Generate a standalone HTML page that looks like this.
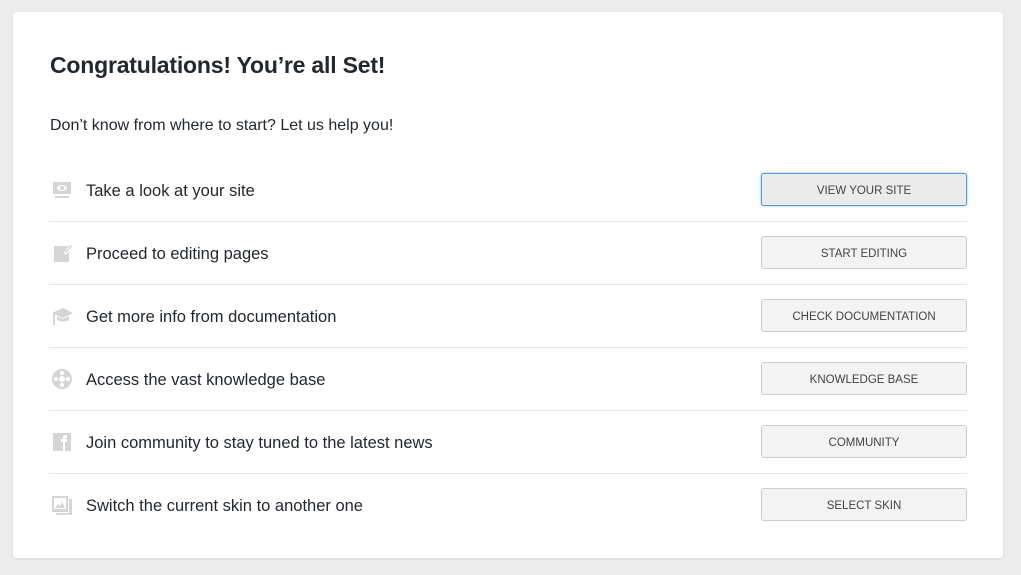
<!DOCTYPE html>
<html><head><style>
body{margin:0;background:#ececec;width:1021px;height:575px;font-family:"Liberation Sans",sans-serif;color:#23282d;overflow:hidden}
.card{position:absolute;left:13px;top:12px;width:990px;height:546px;background:#fff;border-radius:4px;box-shadow:0 1px 3px rgba(0,0,0,.08)}
h1{position:absolute;left:37px;top:40px;margin:0;font-size:23px;font-weight:bold;letter-spacing:-0.2px}
.sub{position:absolute;left:37px;top:105px;font-size:16px}
.row{position:absolute;left:36px;width:918px;height:63px;border-bottom:1px solid #e5e5e5}
.row .t{position:absolute;left:37px;top:24px;font-size:16.5px}
.row .i{position:absolute;left:2px;top:21px;width:22px;height:22px}
.btn{position:absolute;left:712px;top:15px;width:204px;height:31px;border:1px solid #ccc;border-radius:3px;background:#f3f3f3;font-size:11.5px;color:#444;text-align:center;line-height:34px}
.btn.a{border-color:#5b9dd9;background:#ebebeb;box-shadow:0 0 2px rgba(30,140,190,.6)}
</style></head><body>
<div class="card">
<h1>Congratulations! You’re all Set!</h1>
<div class="sub">Don’t know from where to start? Let us help you!</div>
<div class="row" style="top:146px"><svg class="i" viewBox="0 0 22 22"><rect x="2" y="3" width="18" height="12" fill="#d5d5d5"/><ellipse cx="11" cy="9" rx="5" ry="3" fill="#fff"/><circle cx="11" cy="9" r="2" fill="#d5d5d5"/><rect x="4" y="17" width="14" height="2" fill="#d5d5d5"/></svg><div class="t">Take a look at your site</div><div class="btn a">VIEW YOUR SITE</div></div>
<div class="row" style="top:209px"><svg class="i" viewBox="0 0 22 22"><rect x="3" y="4" width="15" height="16" fill="#d5d5d5"/><path d="M13 11 L20 2 L22 4 L15 12Z" fill="#d5d5d5" stroke="#fff"/></svg><div class="t">Proceed to editing pages</div><div class="btn">START EDITING</div></div>
<div class="row" style="top:272px"><svg class="i" viewBox="0 0 22 22"><path d="M1 8 L12 3 L22 8 L12 13Z" fill="#d5d5d5"/><path d="M6 11 V15 Q12 18 18 15 V11 L12 14Z" fill="#d5d5d5"/><rect x="2" y="8" width="2" height="12" fill="#d5d5d5"/></svg><div class="t">Get more info from documentation</div><div class="btn">CHECK DOCUMENTATION</div></div>
<div class="row" style="top:335px"><svg class="i" viewBox="0 0 22 22"><circle cx="11" cy="11" r="10" fill="#d5d5d5"/><circle cx="11" cy="11" r="3" fill="#fff"/><circle cx="11" cy="5" r="2" fill="#fff"/><circle cx="11" cy="17" r="2" fill="#fff"/><circle cx="5" cy="11" r="2" fill="#fff"/><circle cx="17" cy="11" r="2" fill="#fff"/></svg><div class="t">Access the vast knowledge base</div><div class="btn">KNOWLEDGE BASE</div></div>
<div class="row" style="top:398px"><svg class="i" viewBox="0 0 22 22"><rect x="2" y="2" width="18" height="18" fill="#d5d5d5"/><path d="M12 20 V11 H10 V8 H12 V6 Q12 4 15 4 H16 V7 H15 Q14 7 14 8 H16 L16 11 H14 V20Z" fill="#fff"/></svg><div class="t">Join community to stay tuned to the latest news</div><div class="btn">COMMUNITY</div></div>
<div class="row" style="top:461px;border:none"><svg class="i" viewBox="0 0 22 22"><rect x="1" y="2" width="16" height="16" fill="#d5d5d5"/><rect x="3" y="4" width="12" height="11" fill="#fff"/><path d="M4 14 L7 10 L9 12 L11 8 L14 14Z" fill="#d5d5d5"/><path d="M18 5 H21 V21 H5 V19 H18Z" fill="#d5d5d5"/></svg><div class="t">Switch the current skin to another one</div><div class="btn">SELECT SKIN</div></div>
</div>
</body></html>
